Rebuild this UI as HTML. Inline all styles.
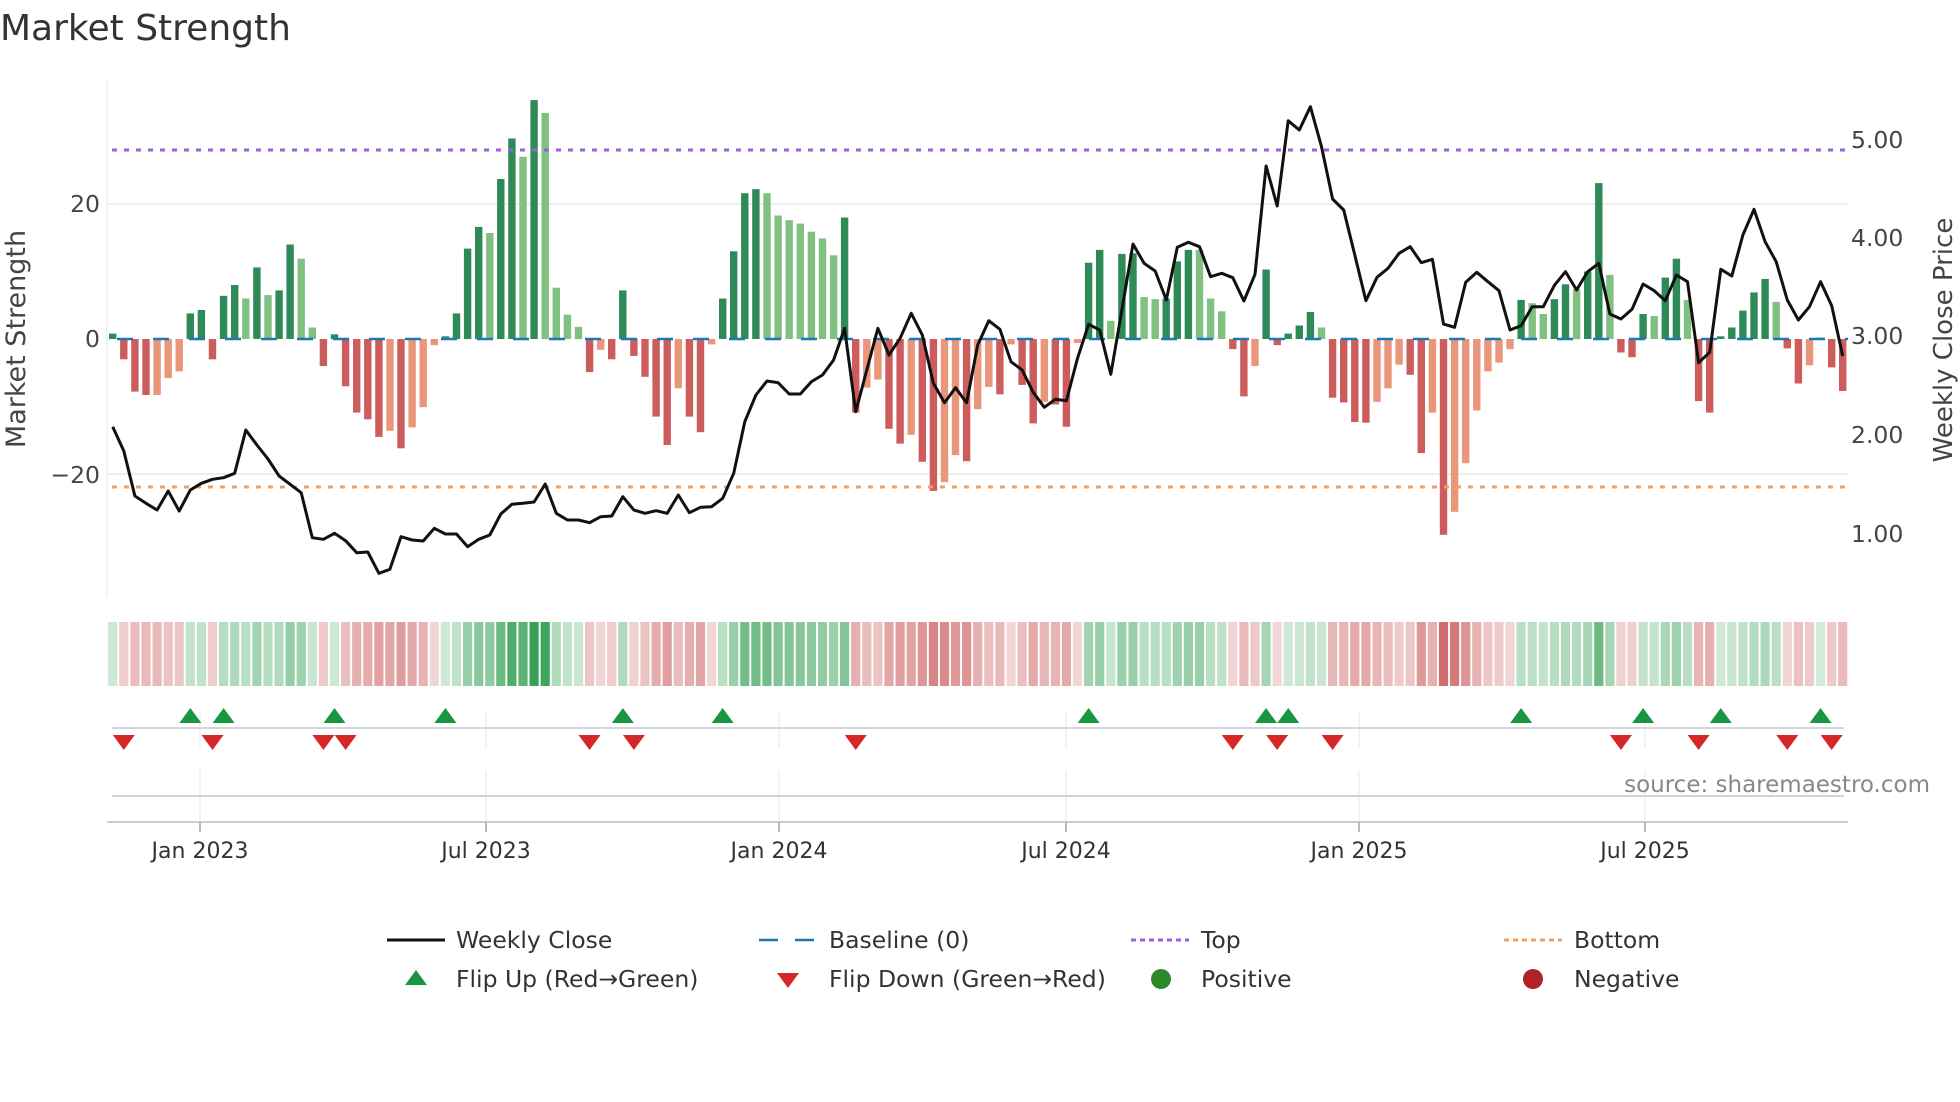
<!DOCTYPE html>
<html><head><meta charset="utf-8"><style>
html,body{margin:0;padding:0;background:#fff;}
svg{display:block;font-family:"DejaVu Sans","Liberation Sans",sans-serif;}
</style></head><body>
<svg id="s" width="1960" height="1102" viewBox="0 0 1960 1102" xmlns="http://www.w3.org/2000/svg">
<text x="0" y="40" font-size="36" fill="#333">Market Strength</text>
<line x1="107" y1="81" x2="107" y2="598" stroke="#eee" stroke-width="1.5"/>
<line x1="107" y1="204" x2="1848" y2="204" stroke="#eee" stroke-width="2"/>
<line x1="107" y1="474" x2="1848" y2="474" stroke="#eee" stroke-width="2"/>
<g font-size="23.5" fill="#444">
<text x="100" y="212" text-anchor="end">20</text>
<text x="100" y="347" text-anchor="end">0</text>
<text x="100" y="483" text-anchor="end">−20</text>
<text x="1851" y="148">5.00</text>
<text x="1851" y="246">4.00</text>
<text x="1851" y="344">3.00</text>
<text x="1851" y="443">2.00</text>
<text x="1851" y="542">1.00</text>
</g>
<text transform="translate(25,339) rotate(-90)" text-anchor="middle" font-size="27" fill="#444">Market Strength</text>
<text transform="translate(1952,340) rotate(-90)" text-anchor="middle" font-size="26" fill="#444">Weekly Close Price</text>
<g id="bars"></g>
<line x1="117" y1="339" x2="1848" y2="339" stroke="#1f77b4" stroke-width="2.5" stroke-dasharray="16 20"/>
<line x1="112" y1="150" x2="1846" y2="150" stroke="#9b5fe0" stroke-width="3" stroke-dasharray="5 7"/>
<line x1="112" y1="487" x2="1846" y2="487" stroke="#f0a060" stroke-width="3" stroke-dasharray="5 7"/>
<polyline id="price" fill="none" stroke="#111" stroke-width="3" stroke-linejoin="round"/>
<g id="heat"></g>
<g stroke="#eee" stroke-width="1.5">
<line x1="200" y1="712" x2="200" y2="748"/><line x1="486" y1="712" x2="486" y2="748"/><line x1="779" y1="712" x2="779" y2="748"/><line x1="1066" y1="712" x2="1066" y2="748"/><line x1="1359" y1="712" x2="1359" y2="748"/><line x1="1645" y1="712" x2="1645" y2="748"/>
<line x1="200" y1="770" x2="200" y2="822"/><line x1="486" y1="770" x2="486" y2="822"/><line x1="779" y1="770" x2="779" y2="822"/><line x1="1066" y1="770" x2="1066" y2="822"/><line x1="1359" y1="770" x2="1359" y2="822"/><line x1="1645" y1="770" x2="1645" y2="822"/>
</g>
<line x1="112" y1="728" x2="1844" y2="728" stroke="#d3d6db" stroke-width="2"/>
<line x1="112" y1="796" x2="1844" y2="796" stroke="#d3d3d3" stroke-width="2"/>
<line x1="107" y1="822" x2="1848" y2="822" stroke="#ccc" stroke-width="2"/>
<g stroke="#bbb" stroke-width="2">
<line x1="200" y1="822" x2="200" y2="832"/><line x1="486" y1="822" x2="486" y2="832"/><line x1="779" y1="822" x2="779" y2="832"/><line x1="1066" y1="822" x2="1066" y2="832"/><line x1="1359" y1="822" x2="1359" y2="832"/><line x1="1645" y1="822" x2="1645" y2="832"/>
</g>
<g id="flips"></g>
<text x="1930" y="792" text-anchor="end" font-size="23" fill="#888">source: sharemaestro.com</text>
<g font-size="22" fill="#333" text-anchor="middle">
<text x="200" y="858">Jan 2023</text><text x="486" y="858">Jul 2023</text><text x="779" y="858">Jan 2024</text><text x="1066" y="858">Jul 2024</text><text x="1359" y="858">Jan 2025</text><text x="1645" y="858">Jul 2025</text>
</g>
<g font-size="23.5" fill="#333">
<line x1="387" y1="940" x2="445" y2="940" stroke="#111" stroke-width="3"/>
<text x="456" y="948">Weekly Close</text>
<line x1="759" y1="940" x2="778" y2="940" stroke="#1f77b4" stroke-width="2.5"/>
<line x1="795" y1="940" x2="814" y2="940" stroke="#1f77b4" stroke-width="2.5"/>
<text x="829" y="948">Baseline (0)</text>
<line x1="1131" y1="940" x2="1189" y2="940" stroke="#9b5fe0" stroke-width="3" stroke-dasharray="5 4"/>
<text x="1201" y="948">Top</text>
<line x1="1504" y1="940" x2="1562" y2="940" stroke="#f0a060" stroke-width="3" stroke-dasharray="5 4"/>
<text x="1574" y="948">Bottom</text>
<polygon points="405,985 427,985 416,970" fill="#1a9641"/>
<text x="456" y="987">Flip Up (Red→Green)</text>
<polygon points="777,973 799,973 788,988" fill="#d62728"/>
<text x="829" y="987">Flip Down (Green→Red)</text>
<circle cx="1161" cy="979" r="10" fill="#2a8a2a"/>
<text x="1201" y="987">Positive</text>
<circle cx="1533" cy="979" r="10" fill="#b22222"/>
<text x="1574" y="987">Negative</text>
</g>
</svg>
<script>
var B=[[.8,'D'],[-3,'R'],[-7.8,'R'],[-8.3,'R'],[-8.3,'S'],[-5.8,'S'],[-4.8,'S'],[3.8,'D'],[4.3,'D'],[-3,'R'],[6.4,'D'],[8,'D'],[6,'L'],[10.6,'D'],[6.5,'L'],[7.2,'D'],[14,'D'],[11.9,'L'],[1.7,'L'],[-4,'R'],[.7,'D'],[-7,'R'],[-10.9,'R'],[-11.9,'R'],[-14.5,'R'],[-13.6,'S'],[-16.2,'R'],[-13.1,'S'],[-10.1,'S'],[-.9,'S'],[.4,'D'],[3.8,'D'],[13.4,'D'],[16.6,'D'],[15.7,'L'],[23.7,'D'],[29.7,'D'],[27,'L'],[35.4,'D'],[33.5,'L'],[7.6,'L'],[3.6,'L'],
[1.8,'L'],[-4.9,'R'],[-1.6,'S'],[-3,'R'],[7.2,'D'],[-2.5,'R'],[-5.6,'R'],[-11.5,'R'],[-15.7,'R'],[-7.3,'S'],[-11.5,'R'],[-13.8,'R'],[-.8,'S'],[6,'D'],[13,'D'],[21.6,'D'],[22.2,'D'],[21.6,'L'],[18.3,'L'],[17.6,'L'],[17.1,'L'],[15.9,'L'],[14.9,'L'],[12.4,'L'],[18,'D'],[-10.9,'R'],[-7.2,'S'],[-6,'S'],[-13.3,'R'],[-15.5,'R'],[-14.2,'S'],[-18.2,'R'],[-22.5,'R'],[-21.2,'S'],[-17.2,'S'],[-18.1,'R'],[-10.4,'S'],[-7.1,'S'],[-8.2,'R'],[-.8,'S'],[-6.8,'R'],
[-12.5,'R'],[-9.3,'S'],[-9.7,'R'],[-13,'R'],[-.6,'S'],[11.3,'D'],[13.2,'D'],[2.7,'L'],[12.6,'D'],[12.7,'D'],[6.2,'L'],[5.9,'L'],[6,'D'],[11.5,'D'],[13.2,'D'],[13.2,'L'],[6,'L'],[4.1,'L'],[-1.5,'R'],[-8.5,'R'],[-4,'S'],[10.3,'D'],[-.9,'R'],[.8,'D'],[2,'D'],[4,'D'],[1.7,'L'],[-8.7,'R'],[-9.4,'R'],[-12.3,'R'],[-12.4,'R'],[-9.3,'S'],[-7.3,'S'],[-3.8,'S'],[-5.3,'R'],[-16.9,'R'],[-10.9,'S'],
[-29,'R'],[-25.6,'S'],[-18.4,'S'],[-10.6,'S'],[-4.8,'S'],[-3.5,'S'],[-1.5,'S'],[5.8,'D'],[5.3,'L'],[3.7,'L'],[5.9,'D'],[8.1,'D'],[7.4,'L'],[10,'D'],[23.1,'D'],[9.5,'L'],[-2,'R'],[-2.7,'R'],[3.7,'D'],[3.4,'L'],[9.1,'D'],[11.9,'D'],[5.8,'L'],[-9.2,'R'],[-10.9,'R'],[.4,'D'],[1.7,'D'],[4.2,'D'],[6.9,'D'],[8.9,'D'],[5.5,'L'],[-1.4,'R'],[-6.6,'R'],[-3.9,'S'],[.2,'D'],[-4.2,'R'],[-7.7,'R']];
var P=[1040,1113,1248,1270,1290,1233,1293,1230,1210,1198,1193,1180,1050,1095,1137,1188,1213,1238,1373,1378,1360,1382,1418,1416,1480,1468,1370,1380,1383,1345,1362,1362,1400,1378,1365,1302,1273,1270,1266,1212,1300,1320,
1320,1328,1310,1308,1250,1290,1300,1292,1300,1245,1298,1282,1280,1255,1180,1025,945,903,908,942,942,905,885,840,745,995,870,745,825,775,700,765,910,968,923,968,795,722,748,845,870,
937,982,958,962,835,733,750,883,690,492,550,573,660,502,487,500,590,580,593,663,583,258,378,122,150,80,200,357,390,525,662,592,565,520,500,548,538,
732,742,607,577,605,632,750,737,680,680,616,575,630,575,550,702,717,688,612,632,662,585,605,848,817,568,588,465,388,485,545,660,720,680,605,677,828];
var C={D:'#2e8b57',L:'#80c080',R:'#cd5c5c',S:'#e9967a'};
var ns='http://www.w3.org/2000/svg';
function el(t,a,p){var e=document.createElementNS(ns,t);for(var k in a)e.setAttribute(k,a[k]);document.getElementById(p).appendChild(e);return e;}
var X0=112.7,DX=11.09,U=6.75,Z=339;
var pts=[];
for(var i=0;i<B.length;i++){
 var x=X0+i*DX,v=B[i][0],h=Math.abs(v)*U;
 el('rect',{x:(x-3.7).toFixed(1),y:(v>0?Z-h:Z).toFixed(1),width:7.4,height:Math.max(h,1).toFixed(1),fill:C[B[i][1]]},'bars');
 var a=0.22+0.78*Math.min(Math.abs(v)/36,1);
 var col=v>=0?'rgba(52,160,84,'+a.toFixed(2)+')':'rgba(200,82,82,'+a.toFixed(2)+')';
 el('rect',{x:(x-4.6).toFixed(1),y:622,width:9.2,height:64,fill:col},'heat');
 pts.push(x.toFixed(1)+','+(80+P[i]/3).toFixed(1));
}
document.getElementById('price').setAttribute('points',pts.join(' '));
var up=[7,10,20,30,46,55,88,104,106,127,138,145,154],dn=[1,9,19,21,43,47,67,101,105,110,136,143,151,155];
up.forEach(function(i){var x=X0+i*DX;el('polygon',{points:(x-11)+',723 '+(x+11)+',723 '+x+',708',fill:'#1a9641'},'flips');});
dn.forEach(function(i){var x=X0+i*DX;el('polygon',{points:(x-11)+',735 '+(x+11)+',735 '+x+',750',fill:'#d62728'},'flips');});
</script>
</body></html>
